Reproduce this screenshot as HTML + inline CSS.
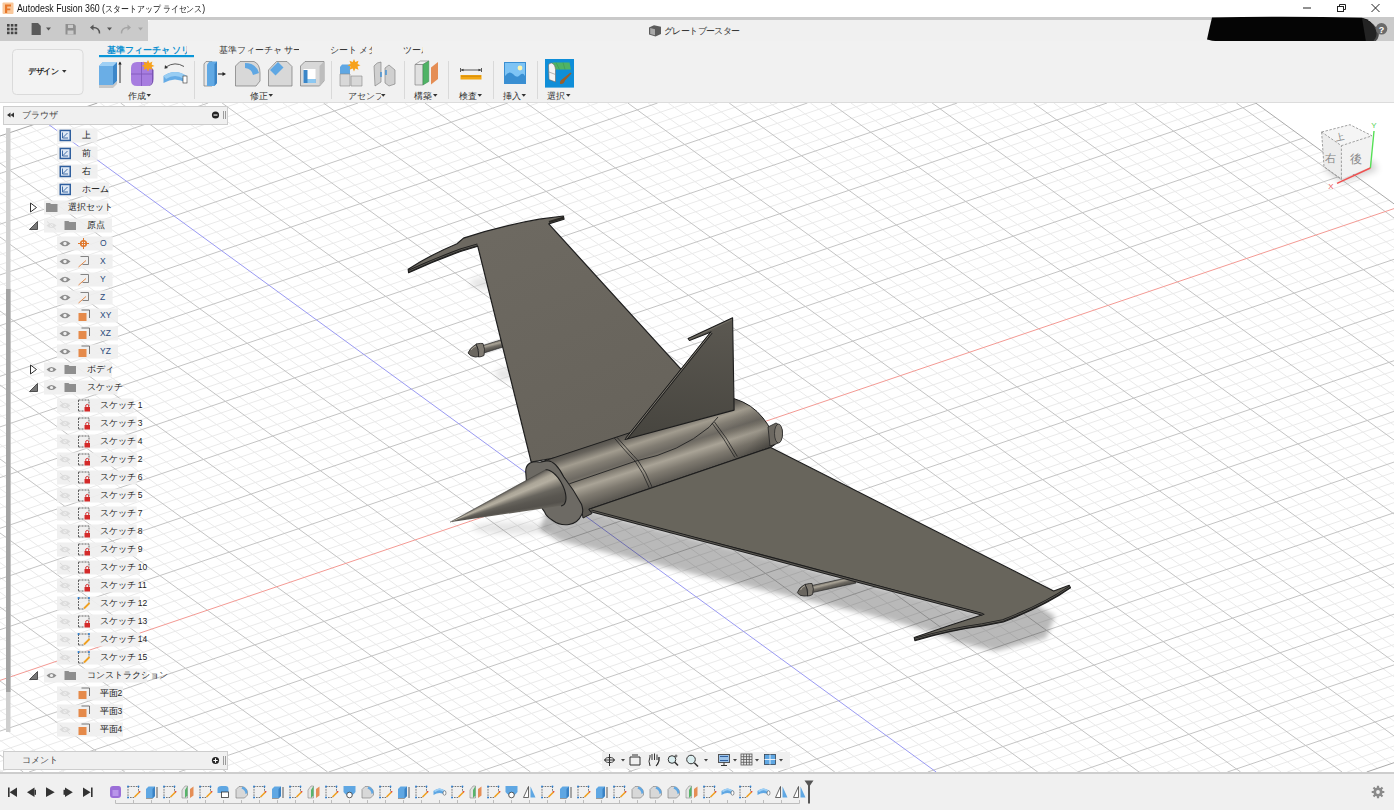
<!DOCTYPE html>
<html><head><meta charset="utf-8">
<style>
*{margin:0;padding:0;box-sizing:border-box}
html,body{width:1394px;height:810px;overflow:hidden;background:#fff;font-family:"Liberation Sans",sans-serif;color:#222}
.a{position:absolute}
#vp{position:absolute;left:0;top:0;width:1394px;height:810px}
.t{position:absolute;font-size:11px;white-space:nowrap;line-height:12px}
</style></head><body>
<svg id="vp" width="1394" height="810" viewBox="0 0 1394 810">
<defs>
<filter id="blur8" x="-30%" y="-30%" width="160%" height="160%"><feGaussianBlur stdDeviation="7"/></filter>
<filter id="blur4" x="-30%" y="-30%" width="160%" height="160%"><feGaussianBlur stdDeviation="4.5"/></filter>
<filter id="blur25" x="-30%" y="-30%" width="160%" height="160%"><feGaussianBlur stdDeviation="2.5"/></filter>
<filter id="blur3" x="-30%" y="-30%" width="160%" height="160%"><feGaussianBlur stdDeviation="3"/></filter>
</defs>
<rect x="0" y="103" width="1394" height="670" fill="#fff"/>
<path d="M0.0 143.1L118.3 103.0M0.0 153.2L148.3 103.0M0.0 163.3L178.3 103.0M0.0 183.6L238.2 103.0M0.0 193.7L268.1 103.0M0.0 203.9L298.1 103.0M0.0 214.0L328.1 103.0M0.0 769.8L3.0 772.0M0.0 234.3L388.0 103.0M-0.0 740.2L43.6 772.0M0.0 244.4L417.9 103.0M0.0 725.4L63.9 772.0M0.0 254.6L447.9 103.0M0.0 710.6L84.2 772.0M0.0 264.7L477.9 103.0M0.0 695.8L104.5 772.0M0.0 285.0L537.8 103.0M0.0 666.2L145.1 772.0M0.0 295.1L567.7 103.0M0.0 651.4L165.3 772.0M0.0 305.3L597.7 103.0M0.0 636.6L185.6 772.0M0.0 315.4L627.6 103.0M0.0 621.8L205.9 772.0M0.0 335.7L687.6 103.0M0.0 592.2L246.5 772.0M0.0 345.8L717.5 103.0M0.0 577.4L266.8 772.0M0.0 356.0L747.5 103.0M0.0 562.6L287.1 772.0M0.0 366.1L777.4 103.0M0.0 547.8L307.4 772.0M0.0 386.4L837.4 103.0M0.0 518.2L347.9 772.0M0.0 396.5L867.3 103.0M0.0 503.4L368.2 772.0M0.0 406.7L897.3 103.0M0.0 488.6L388.5 772.0M0.0 416.8L927.2 103.0M0.0 473.8L408.8 772.0M0.0 437.1L987.2 103.0M-0.0 444.2L449.4 772.0M0.0 447.2L1017.1 103.0M0.0 429.4L469.6 772.0M0.0 457.4L1047.1 103.0M0.0 414.6L489.9 772.0M0.0 467.5L1077.0 103.0M0.0 399.8L510.2 772.0M0.0 487.8L1137.0 103.0M0.0 370.2L550.8 772.0M0.0 497.9L1166.9 103.0M0.0 355.4L571.1 772.0M0.0 508.1L1196.9 103.0M0.0 340.6L591.4 772.0M0.0 518.2L1226.8 103.0M0.0 325.8L611.7 772.0M0.0 538.5L1265.5 110.2M0.0 296.2L652.2 772.0M0.0 548.6L1275.0 117.1M0.0 281.4L672.5 772.0M0.0 558.8L1284.5 124.0M0.0 266.6L692.8 772.0M0.0 568.9L1294.0 131.0M0.0 251.8L713.1 772.0M0.0 589.2L1313.0 144.8M0.0 222.2L753.7 772.0M0.0 599.3L1322.5 151.7M-0.0 207.4L774.0 772.0M0.0 609.5L1332.0 158.7M0.0 192.6L794.2 772.0M0.0 619.6L1341.5 165.6M-0.0 177.8L814.5 772.0M0.0 639.9L1360.5 179.4M0.0 148.2L855.1 772.0M0.0 650.0L1370.0 186.4M2.4 135.1L875.4 772.0M0.0 660.1L1379.5 193.3M16.3 130.5L895.7 772.0M0.0 670.3L1389.0 200.2M30.1 125.8L916.0 772.0M0.0 690.6L1394.0 218.8M57.8 116.4L956.5 772.0M0.0 700.7L1394.0 228.9M71.7 111.7L976.8 772.0M0.0 710.8L1394.0 239.1M85.5 107.0L997.1 772.0M0.0 721.0L1394.0 249.2M100.3 103.0L1017.4 772.0M0.0 741.3L1394.0 269.5M140.9 103.0L1058.0 772.0M0.0 751.4L1394.0 279.6M161.2 103.0L1078.3 772.0M0.0 761.5L1394.0 289.8M181.5 103.0L1098.5 772.0M0.0 771.7L1394.0 299.9M201.8 103.0L1118.8 772.0M59.0 772.0L1394.0 320.2M242.4 103.0L1159.4 772.0M88.9 772.0L1394.0 330.3M262.6 103.0L1179.7 772.0M118.9 772.0L1394.0 340.5M282.9 103.0L1200.0 772.0M148.8 772.0L1394.0 350.6M303.2 103.0L1220.3 772.0M208.8 772.0L1394.0 370.9M343.8 103.0L1260.8 772.0M238.7 772.0L1394.0 381.0M364.1 103.0L1281.1 772.0M268.7 772.0L1394.0 391.2M384.4 103.0L1301.4 772.0M298.6 772.0L1394.0 401.3M404.6 103.0L1321.7 772.0M358.5 772.0L1394.0 421.6M445.2 103.0L1362.3 772.0M388.5 772.0L1394.0 431.7M465.5 103.0L1377.5 768.3M418.5 772.0L1394.0 441.8M485.8 103.0L1391.4 763.6M448.4 772.0L1394.0 452.0M506.1 103.0L1394.0 750.7M508.3 772.0L1394.0 472.3M546.7 103.0L1394.0 721.1M538.3 772.0L1394.0 482.4M566.9 103.0L1394.0 706.3M568.3 772.0L1394.0 492.5M587.2 103.0L1394.0 691.5M598.2 772.0L1394.0 502.7M607.5 103.0L1394.0 676.7M658.1 772.0L1394.0 523.0M648.1 103.0L1394.0 647.1M688.1 772.0L1394.0 533.1M668.4 103.0L1394.0 632.4M718.1 772.0L1394.0 543.2M688.7 103.0L1394.0 617.6M748.0 772.0L1394.0 553.4M709.0 103.0L1394.0 602.8M807.9 772.0L1394.0 573.7M749.5 103.0L1394.0 573.2M837.9 772.0L1394.0 583.8M769.8 103.0L1394.0 558.4M867.9 772.0L1394.0 593.9M790.1 103.0L1394.0 543.6M897.8 772.0L1394.0 604.1M810.4 103.0L1394.0 528.8M957.7 772.0L1394.0 624.4M851.0 103.0L1394.0 499.2M987.7 772.0L1394.0 634.5M871.2 103.0L1394.0 484.4M1017.6 772.0L1394.0 644.6M891.5 103.0L1394.0 469.6M1047.6 772.0L1394.0 654.8M911.8 103.0L1394.0 454.8M1107.5 772.0L1394.0 675.0M952.4 103.0L1394.0 425.2M1137.5 772.0L1394.0 685.2M972.7 103.0L1394.0 410.4M1167.4 772.0L1394.0 695.3M993.0 103.0L1394.0 395.6M1197.4 772.0L1394.0 705.5M1013.3 103.0L1394.0 380.8M1257.3 772.0L1394.0 725.7M1053.8 103.0L1394.0 351.2M1287.3 772.0L1394.0 735.9M1074.1 103.0L1394.0 336.4M1317.2 772.0L1394.0 746.0M1094.4 103.0L1394.0 321.6M1347.2 772.0L1394.0 756.2M1114.7 103.0L1394.0 306.8M1155.3 103.0L1394.0 277.2M1175.6 103.0L1394.0 262.4M1195.8 103.0L1394.0 247.6M1216.1 103.0L1394.0 232.8" stroke="#eaeaea" stroke-width="1" fill="none"/>
<path d="M0.0 173.5L208.2 103.0M0.0 224.2L358.0 103.0M0.0 755.0L23.3 772.0M0.0 274.9L507.8 103.0M0.0 681.0L124.8 772.0M0.0 325.6L657.6 103.0M0.0 607.0L226.2 772.0M0.0 376.3L807.4 103.0M0.0 533.0L327.6 772.0M0.0 426.9L957.2 103.0M0.0 459.0L429.1 772.0M0.0 477.6L1107.0 103.0M0.0 385.0L530.5 772.0M0.0 528.3L1256.0 103.3M0.0 311.0L631.9 772.0M0.0 579.0L1303.5 137.9M0.0 237.0L733.4 772.0M0.0 629.7L1351.0 172.5M0.0 163.0L834.8 772.0M0.0 731.1L1394.0 259.3M120.6 103.0L1037.7 772.0M29.0 772.0L1394.0 310.0M222.1 103.0L1139.1 772.0M178.8 772.0L1394.0 360.7M323.5 103.0L1240.6 772.0M328.6 772.0L1394.0 411.4M424.9 103.0L1342.0 772.0M478.4 772.0L1394.0 462.1M526.4 103.0L1394.0 735.9M628.2 772.0L1394.0 512.8M627.8 103.0L1394.0 661.9M778.0 772.0L1394.0 563.5M729.2 103.0L1394.0 588.0M927.8 772.0L1394.0 614.2M830.7 103.0L1394.0 514.0M1077.6 772.0L1394.0 664.9M932.1 103.0L1394.0 440.0M1227.4 772.0L1394.0 715.6M1033.5 103.0L1394.0 366.0M1135.0 103.0L1394.0 292.0M1236.4 103.0L1394.0 218.0" stroke="#c4c4c4" stroke-width="1" fill="none"/>
<path d="M0.0 136.0L97.4 103.0M1366.7 772.0L1394.0 762.7M1255.7 103.0L1394.0 203.9" stroke="#a9a9a9" stroke-width="1" fill="none"/>
<path d="M0.0 680.4L1394.0 208.6" stroke="#f39a94" stroke-width="1" fill="none"/>
<path d="M44.0 121.1L936.2 772.0" stroke="#9a9af2" stroke-width="1" fill="none"/>

<defs>
<linearGradient id="gFus" gradientUnits="userSpaceOnUse" x1="650" y1="426" x2="668" y2="482">
<stop offset="0" stop-color="#55524c"/><stop offset="0.08" stop-color="#67635c"/><stop offset="0.22" stop-color="#a29c8f"/>
<stop offset="0.34" stop-color="#827d73"/><stop offset="0.46" stop-color="#6d6962"/><stop offset="0.52" stop-color="#7d786e"/>
<stop offset="0.64" stop-color="#a9a396"/><stop offset="0.8" stop-color="#7f7a70"/><stop offset="1" stop-color="#5a5751"/>
</linearGradient>
<linearGradient id="gCone" gradientUnits="userSpaceOnUse" x1="545" y1="470" x2="557" y2="506">
<stop offset="0" stop-color="#5f5c56"/><stop offset="0.12" stop-color="#8a857b"/><stop offset="0.3" stop-color="#b6b0a2"/>
<stop offset="0.45" stop-color="#8f8a7f"/><stop offset="0.62" stop-color="#6a675f"/><stop offset="0.85" stop-color="#57544e"/><stop offset="1" stop-color="#625f58"/>
</linearGradient>
<linearGradient id="gRear" gradientUnits="userSpaceOnUse" x1="738" y1="410" x2="778" y2="440">
<stop offset="0" stop-color="#000" stop-opacity="0"/><stop offset="0.6" stop-color="#000" stop-opacity="0.08"/><stop offset="1" stop-color="#000" stop-opacity="0.3"/></linearGradient>
<linearGradient id="gFin" gradientUnits="userSpaceOnUse" x1="700" y1="320" x2="690" y2="440">
<stop offset="0" stop-color="#5b5851"/><stop offset="1" stop-color="#47453f"/>
</linearGradient>
<linearGradient id="gWingU" gradientUnits="userSpaceOnUse" x1="500" y1="230" x2="600" y2="450">
<stop offset="0" stop-color="#6d6961"/><stop offset="1" stop-color="#67635b"/>
</linearGradient>
<linearGradient id="gPitB" gradientUnits="userSpaceOnUse" x1="492" y1="342" x2="494" y2="350">
<stop offset="0" stop-color="#6e6a62"/><stop offset="0.3" stop-color="#a9a396"/><stop offset="0.6" stop-color="#6d6962"/><stop offset="1" stop-color="#4d4b46"/></linearGradient>
<linearGradient id="gPitB2" gradientUnits="userSpaceOnUse" x1="830" y1="581" x2="832" y2="589">
<stop offset="0" stop-color="#6e6a62"/><stop offset="0.3" stop-color="#a9a396"/><stop offset="0.6" stop-color="#6d6962"/><stop offset="1" stop-color="#4d4b46"/></linearGradient>
<linearGradient id="gPit" gradientUnits="userSpaceOnUse" x1="0" y1="0" x2="0.3" y2="1">
<stop offset="0" stop-color="#5b5852"/><stop offset="0.35" stop-color="#a8a295"/><stop offset="1" stop-color="#4e4c47"/>
</linearGradient>
</defs>
<!-- shadows -->
<g filter="url(#blur25)" opacity="0.27">
<path d="M545 515 L590 511 L984 614.5 L1035 604 L1055 616 L1046 638 L996 651 L960 643 L929 631 L870 615 L689 573 L560 541 L540 530 Z" fill="#000"/>
</g>
<g filter="url(#blur3)" opacity="0.1">
<ellipse cx="484" cy="283" rx="14" ry="6" fill="#000"/>
<ellipse cx="505" cy="374" rx="10" ry="6" fill="#000"/>
<ellipse cx="512" cy="528" rx="40" ry="6" fill="#000"/>
</g>
<!-- pitot 1 -->
<path d="M483 345.5 L502 339.5 L503 347 L484 353 Z" fill="url(#gPitB)"/>
<path d="M483 345.5 L502 339.5 M484 353 L503 347" stroke="#2a2a2a" stroke-width="0.7"/>
<path d="M468 353 Q470 348 475 345 L477 344 L479 356.5 L475.5 357 Q470 356.5 468 353 Z" fill="#6a665f" stroke="#222" stroke-width="0.8"/>
<path d="M476 344 Q481 343 483 343.5 Q485.5 349 484 355.5 Q481 357 478.5 357 Q480 350 476 344 Z" fill="#807b72" stroke="#222" stroke-width="0.8"/>
<path d="M471 350 Q473 347 476 346" stroke="#b0aa9c" stroke-width="1" fill="none"/>
<!-- upper wing -->
<path d="M408.2 269.2 Q430 255 457 243.7 L463.5 238.1 Q500 226 539.3 219.2 L563.4 216 L564 219.2 L548.7 223.9 L680 368.1 L712 403 L600 450 L531.2 462.1 L477.8 246.3 L460.5 251.5 Q434 261 408.6 272.7 Z" fill="url(#gWingU)" stroke="#1e1e1e" stroke-width="1.2" stroke-linejoin="round"/>
<path d="M409 271 Q434 259.5 460.5 249.8 L477.6 244.8" stroke="#1e1e1e" stroke-width="2.6" fill="none"/><path d="M409 271 Q434 259.5 460.5 249.8 L477.6 244.8" stroke="#6f6b63" stroke-width="0.7" fill="none"/>
<path d="M549 222 L563.8 217.6" stroke="#2a2824" stroke-width="2.2" fill="none"/>
<!-- fuselage -->
<path d="M540.7 462.1 L615 437.6 L734 398.6 Q752 404 763 418 Q773 430 775 444.5 L770.7 447.4 L589 509.2 L592 513.5 L583 518 L581.5 508.3 L563.8 477 Z" fill="url(#gFus)" stroke="#1e1e1e" stroke-width="1"/>
<path d="M734 398.6 Q752 404 763 418 Q773 430 775 444.5 L770.7 447.4 L736 459 L712 423 Z" fill="url(#gRear)"/>
<!-- fairing/seam -->
<path d="M569.3 483.8 L636 461 Q680 452 709 427.3 L718 417" stroke="#222" stroke-width="0.9" fill="none"/>
<!-- rings -->
<path d="M614.3 438 Q626 452 635 461 Q643 472 649.5 488.5" stroke="#222" stroke-width="0.8" fill="none"/>
<path d="M617 437.3 Q629 451 638 460.5 Q646 471.5 652.3 487.5" stroke="#222" stroke-width="0.8" fill="none"/>
<path d="M712 423 Q724 438 734.9 457.4" stroke="#222" stroke-width="0.8" fill="none"/>
<path d="M714.5 422 Q726.5 437 737.4 456.5" stroke="#222" stroke-width="0.8" fill="none"/>
<!-- fin -->
<path d="M732.6 317.8 L688.1 338.5 L689.5 340.5 L711.1 331.9 L625.1 439.5 L734.1 410.1 Z" fill="url(#gFin)" stroke="#1c1c1c" stroke-width="1.1" stroke-linejoin="round"/>
<path d="M689 339.5 L732 319.5" stroke="#7a766c" stroke-width="0.8"/>
<path d="M711.5 332.5 L626.5 438.5" stroke="#1c1c1c" stroke-width="2.6"/>
<path d="M711.5 332.5 L626.5 438.5" stroke="#8e897d" stroke-width="0.9"/>
<!-- rear nozzle -->
<path d="M768 427 L776 423 Q783 426 782.5 434 Q782 442 776 444 L770 446 Z" fill="#6c6861" stroke="#222" stroke-width="0.8"/>
<ellipse cx="778.5" cy="433.5" rx="4" ry="9.5" fill="#807b72" stroke="#222" stroke-width="0.7"/>
<!-- front face -->
<path d="M525.8 473 Q525 466 530 463 Q535 461 540 462.2 L547.5 460.7 Q556 461 563.8 477 Q574 490 581.5 504.2 Q584 512 581.5 515 Q578 523 569 524.5 Q560 526 552 520 Q546 516 544.8 512.3 Q535 498 526.5 482 Z" fill="#6d6a64" stroke="#1e1e1e" stroke-width="1.1"/>
<!-- cone -->

<!-- pitot 2 -->
<path d="M812 585.5 L856 576 L856 583 L812.5 592.5 Z" fill="url(#gPitB2)"/>
<path d="M812 585.5 L856 576 M812.5 592.5 L856 583" stroke="#2a2a2a" stroke-width="0.7"/>
<path d="M797.4 592.6 Q799 587.5 804 585 L806 584.2 L808 595.8 L804 596 Q799 596 797.4 592.6 Z" fill="#6a665f" stroke="#222" stroke-width="0.8"/>
<path d="M805 584.5 Q810 583 812 583.5 Q814.5 589 812.5 594.5 Q810 596 807.5 596 Q809 589.5 805 584.5 Z" fill="#807b72" stroke="#222" stroke-width="0.8"/>
<path d="M800.5 590 Q802 587 805 585.8" stroke="#b0aa9c" stroke-width="1" fill="none"/>
<!-- lower wing -->
<path d="M589 509.2 L770.7 447.4 L1053.7 591 L1069.2 585.2 L1070.5 587.8 Q1045 606 1003.3 622 L982.6 625.9 Q950 630 914.9 640.7 L914.2 637.5 Q950 625 984 614.2 L780 559.5 L589.8 510.8 Z" fill="#68655c" stroke="#1e1e1e" stroke-width="1.1" stroke-linejoin="round"/>
<path d="M591 510.8 L982.5 614.3" stroke="#1e1e1e" stroke-width="2.8" fill="none"/><path d="M591 510.8 L982.5 614.3" stroke="#6f6b63" stroke-width="0.8" fill="none"/>
<path d="M1069.5 587 Q1044 604.5 1003 620.5 L982.5 624.5 Q950 629 915 639" stroke="#1e1e1e" stroke-width="2.6" fill="none"/><path d="M1069.5 587 Q1044 604.5 1003 620.5 L982.5 624.5 Q950 629 915 639" stroke="#6f6b63" stroke-width="0.7" fill="none"/>

</svg>
<div class="a" style="left:440px;top:460px;width:130px;height:70px;clip-path:polygon(10.00px 62.20px,105.55px 9.75px,106.36px 9.72px,107.21px 9.80px,108.10px 9.99px,109.02px 10.29px,109.97px 10.70px,110.93px 11.22px,111.92px 11.84px,112.91px 12.55px,113.90px 13.36px,114.89px 14.26px,115.87px 15.24px,116.83px 16.30px,117.78px 17.43px,118.69px 18.63px,119.57px 19.88px,120.42px 21.18px,121.21px 22.52px,121.96px 23.89px,122.66px 25.29px,123.30px 26.70px,123.88px 28.12px,124.39px 29.54px,124.83px 30.94px,125.21px 32.33px,125.50px 33.69px,125.73px 35.01px,125.88px 36.29px,125.95px 37.52px,125.94px 38.69px,125.85px 39.79px,125.69px 40.81px,125.45px 41.76px,125.13px 42.62px,124.75px 43.38px,124.29px 44.06px,123.76px 44.63px,123.17px 45.09px,122.52px 45.46px,121.81px 45.71px,121.05px 45.85px);background:conic-gradient(from 0deg at 10.0px 62.2px,#5a5752 0deg,#5a5752 61.24deg,#827d74 62.66deg,#aca698 64.91deg,#b4aea0 67.35deg,#8e897e 69.80deg,#68655e 72.45deg,#5a5751 75.92deg,#54514c 79.59deg,#66635c 81.62deg,#66635c 360deg)"></div>
<svg class="a" style="left:0;top:0" width="1394" height="810"><path d="M545.5 469.8 L546.36 469.72 L547.21 469.80 L548.10 469.99 L549.02 470.29 L549.97 470.70 L550.93 471.22 L551.92 471.84 L552.91 472.55 L553.90 473.36 L554.89 474.26 L555.87 475.24 L556.83 476.30 L557.78 477.43 L558.69 478.63 L559.57 479.88 L560.42 481.18 L561.21 482.52 L561.96 483.89 L562.66 485.29 L563.30 486.70 L563.88 488.12 L564.39 489.54 L564.83 490.94 L565.21 492.33 L565.50 493.69 L565.73 495.01 L565.88 496.29 L565.95 497.52 L565.94 498.69 L565.85 499.79 L565.69 500.81 L565.45 501.76 L565.13 502.62 L564.75 503.38 L564.29 504.06 L563.76 504.63 L563.17 505.09 L562.52 505.46 L561.81 505.71 L561.05 505.85" stroke="#1e1e1e" stroke-width="1.1" fill="none"/><path d="M450 522.2 L545.6 469.8" stroke="#4a4843" stroke-width="0.6"/></svg>

<!-- ===== title bar ===== -->
<svg class="a" style="left:0;top:0" width="1394" height="103">
<rect x="0" y="0" width="1394" height="17" fill="#fff"/>
<rect x="2.5" y="2.5" width="11" height="11.5" rx="1" fill="#f9c89b"/>
<path d="M5 4.5 H11 V6.5 H7.2 V8.5 H10.3 V10.3 H7.2 V13 H5 Z" fill="#e8772a"/>
<!-- window controls -->
<path d="M1303 8 H1311" stroke="#222" stroke-width="1"/>
<rect x="1337.5" y="6.5" width="6" height="5" fill="none" stroke="#222" stroke-width="1"/>
<path d="M1339.5 6.5 V4.5 H1345.5 V9.5 H1343.5" fill="none" stroke="#222" stroke-width="1"/>
<path d="M1371.5 4 L1379.5 12 M1379.5 4 L1371.5 12" stroke="#222" stroke-width="1"/>
<!-- top strip -->
<rect x="0" y="17" width="1394" height="3" fill="#c9c9c9"/>
<rect x="0" y="17" width="148" height="24" fill="#cacaca"/>
<path d="M148 41 V23 Q148 20 151 20 H1394 V41 Z" fill="#f0f0f0"/>
<rect x="1369" y="20" width="25" height="21" fill="#cbcbcb"/>
<!-- apps grid -->
<g fill="#454545">
<rect x="7" y="24" width="2.6" height="2.6"/><rect x="10.8" y="24" width="2.6" height="2.6"/><rect x="14.6" y="24" width="2.6" height="2.6"/>
<rect x="7" y="27.8" width="2.6" height="2.6"/><rect x="10.8" y="27.8" width="2.6" height="2.6"/><rect x="14.6" y="27.8" width="2.6" height="2.6"/>
<rect x="7" y="31.6" width="2.6" height="2.6"/><rect x="10.8" y="31.6" width="2.6" height="2.6"/><rect x="14.6" y="31.6" width="2.6" height="2.6"/>
</g>
<path d="M31.6 23 H38 L40.8 26 V35 H31.6 Z" fill="#5a5a5a"/>
<path d="M46 27.5 H51 L48.5 30.5 Z" fill="#555"/>
<path d="M65.5 24 H74 L75.8 25.8 V34.4 H65.5 Z" fill="#8f8f8f"/>
<rect x="68" y="24.8" width="5" height="3.2" fill="#cacaca"/><rect x="67.5" y="30.5" width="6" height="3.9" fill="#cacaca"/>
<path d="M99.5 33.5 Q99.5 27.5 93 27.5 H91.5" fill="none" stroke="#555" stroke-width="1.4"/>
<path d="M90 27.5 L93.5 24.5 V30.5 Z" fill="#555"/>
<path d="M107 27.5 H112 L109.5 30.5 Z" fill="#555"/>
<path d="M121.5 33.5 Q121.5 27.5 128 27.5 H129.5" fill="none" stroke="#a5a5a5" stroke-width="1.4"/>
<path d="M131 27.5 L127.5 24.5 V30.5 Z" fill="#a5a5a5"/>
<path d="M138 27.5 H143 L140.5 30.5 Z" fill="#a5a5a5"/>
<!-- doc tab cube -->
<path d="M649 27.5 L654 25.2 L661 26.8 V34 L655.5 36.4 L649 34.5 Z" fill="#5c5c5c"/>
<path d="M650.2 28 L655 29.3 V35.2 L650.2 33.9 Z" fill="#a9a9a9"/>
<!-- redaction blob -->
<path d="M1212 17.5 Q1290 16 1362 17.8 Q1372 20 1376 30 Q1378 38 1372 42 Q1300 43.5 1240 42.5 Q1215 42 1207 39.5 Q1209 30 1212 17.5 Z" fill="#050505"/>
<path d="M1362 18 Q1374 22 1379 32 Q1379 40 1374 42 L1366 42 Z" fill="#2a2a2a" opacity="0.8"/>
<circle cx="1381.5" cy="28.8" r="5.8" fill="#6a6a6a"/>
<text x="1381.5" y="32.5" font-family="Liberation Sans" font-weight="bold" font-size="9" fill="#fff" text-anchor="middle">?</text>
<!-- ribbon -->
<rect x="0" y="41" width="1394" height="61" fill="#f1f1f1"/>
<rect x="0" y="102" width="1394" height="1" fill="#dcdcdc"/>
<rect x="12.5" y="49.5" width="70.5" height="45" rx="4" fill="#f3f3f3" stroke="#dadada" stroke-width="1"/>
<path d="M62 70 H66.5 L64.25 72.8 Z" fill="#333"/>
<rect x="99" y="55" width="95" height="2.2" fill="#0a96d8"/>
<g stroke="#d9d9d9" stroke-width="1">
<path d="M194.5 61 V99 M331.5 61 V99 M404.5 61 V99 M448.5 61 V99 M493.5 61 V99 M537.5 61 V99"/>
</g>
<!-- dropdown arrows for labels -->
<g fill="#333">
<path d="M146.5 94 H151 L148.75 96.8 Z"/>
<path d="M268.5 94 H273 L270.75 96.8 Z"/>
<path d="M381 94 H385.5 L383.25 96.8 Z"/>
<path d="M433 94 H437.5 L435.25 96.8 Z"/>
<path d="M477.5 94 H482 L479.75 96.8 Z"/>
<path d="M521.5 94 H526 L523.75 96.8 Z"/>
<path d="M566 94 H570.5 L568.25 96.8 Z"/>
</g>
<!-- extrude icon -->
<path d="M99 66 L103 62 H117 V81 L113 85 H99 Z" fill="#6aaee6"/>
<path d="M113 66 L117 62 V81 L113 85 Z" fill="#3d87c9"/>
<path d="M99 66 L103 62 H117 L113 66 Z" fill="#9fd0f5"/>
<path d="M99 85 H113 L117 81 V84 L113 88 H99 Z" fill="#c8c8c8"/>
<path d="M120 83 V62.5" stroke="#222" stroke-width="0.9"/><path d="M118.3 64.5 L120 61.5 L121.7 64.5 Z" fill="#222"/>
<!-- purple solid icon -->
<path d="M131 68 Q131 62 137 62 H146 Q152 62 152 68 V80 Q152 86 146 86 H137 Q131 86 131 80 Z" fill="#a77de0"/>
<path d="M141.5 62 V86 M131 74 H152" stroke="#7d55b8" stroke-width="0.8"/>
<path d="M152 68 V80 Q152 86 146 86 H149 Q153.5 85 153.5 79 V70 Z" fill="#7a52b5"/>
<path d="M148 60 L149.5 63 L152.5 61.5 L151.5 64.5 L154.5 66 L151.5 67 L152.5 70 L149.5 68.5 L148 71.5 L146.5 68.5 L143.5 70 L144.5 67 L141.5 66 L144.5 64.5 L143.5 61.5 L146.5 63 Z" fill="#f7a21b"/>
<!-- revolve icon -->
<path d="M163.5 76 Q175 68 186.5 76 V83 Q175 76 163.5 83 Z" fill="#66ace6"/>
<path d="M163.5 76 Q175 68 186.5 76 L184 79 Q175 73 166 79 Z" fill="#98cdf3"/>
<rect x="183" y="76" width="4" height="7" fill="#fff" stroke="#333" stroke-width="0.6"/>
<path d="M166 67 Q175 61 184 66.5" fill="none" stroke="#333" stroke-width="0.8"/><path d="M165 65 L164.5 68.8 L168 68 Z" fill="#333"/>
<!-- press pull -->
<path d="M204 64 L206 61.5 H212 V86 H204 Z" fill="#e6e6e6" stroke="#777" stroke-width="0.7"/>
<path d="M207 64.5 L209.5 61.5 H217 V83 L214.5 86 H207 Z" fill="#61a9e4"/>
<path d="M214.5 64.5 L217 61.5 V83 L214.5 86 Z" fill="#3b83c4"/>
<path d="M218 74 H223.5" stroke="#222" stroke-width="1.1"/><path d="M222.5 72 L226 74 L222.5 76 Z" fill="#222"/>
<!-- fillet -->
<path d="M235.5 66 L240 61.5 H254 Q260 64 260 73 V81 L256 86 H235.5 Z" fill="#d8d8d8" stroke="#777" stroke-width="0.7"/>
<path d="M245 63 Q256 63 259 73 L253 75 Q252 69 245 68 Z" fill="#5fa7e3"/>
<!-- chamfer -->
<path d="M268.5 70 L276.5 61.5 H287 L292 66.5 V86 H268.5 Z" fill="#d8d8d8" stroke="#777" stroke-width="0.7"/>
<path d="M270 70 L278 62 L283.5 67.5 L275.5 75.5 Z" fill="#5fa7e3"/>
<!-- shell -->
<path d="M300.5 66 L305 61.5 H324 V81 L319.5 86 H300.5 Z" fill="#d8d8d8" stroke="#777" stroke-width="0.7"/>
<path d="M319.5 66 L324 61.5 V81 L319.5 86 Z" fill="#bdbdbd"/>
<rect x="303.5" y="69" width="12" height="14" fill="#fff"/>
<path d="M303.5 70 H307.5 V79 H315.5 V83 H303.5 Z" fill="#3a86c8"/><path d="M307.5 79 H315.5 V83 H307.5Z" fill="#8cc8f2"/>
<!-- assembly new component -->
<path d="M340 67 L342 64.5 H350 V74 H340 Z" fill="#5fa7e3"/>
<path d="M340 74 H350 V86 H340 Z M351 76 H362 V86 H351 Z" fill="#d8d8d8" stroke="#888" stroke-width="0.6"/>
<path d="M354 59 L355.3 62 L358.5 60.8 L357.5 64 L360.5 65.3 L357.5 66.5 L358.5 69.7 L355.3 68.5 L354 71.5 L352.7 68.5 L349.5 69.7 L350.5 66.5 L347.5 65.3 L350.5 64 L349.5 60.8 L352.7 62 Z" fill="#f7a21b"/>
<!-- joint -->
<path d="M374 66 Q377 62 381 62 V82 L375 86 Z" fill="#d0d0d0" stroke="#777" stroke-width="0.6"/>
<path d="M385 68 L389 65 L395 70 V84 L389 86 L385 83 Z" fill="#d0d0d0" stroke="#777" stroke-width="0.6"/>
<path d="M381 72 V77 M386 70 V75" stroke="#3d8fd6" stroke-width="1.4"/>
<!-- construct -->
<path d="M415 64.5 L420.5 61 H428.8 L423 64.5 Z" fill="#f2f2f2" stroke="#777" stroke-width="0.6"/>
<path d="M415 64.5 H423 V85 H415 Z" fill="#e0e0e0" stroke="#777" stroke-width="0.6"/>
<path d="M423 64.5 L428.8 61 V81.5 L423 85 Z" fill="#4fb365" stroke="#3a8a4c" stroke-width="0.5"/>
<path d="M431 67.5 L438 62 V79 L431 84.5 Z" fill="#e58e55"/>
<!-- measure -->
<path d="M460.5 68 V72 M481.5 68 V72 M461 70 H481" stroke="#333" stroke-width="0.8"/>
<path d="M461 70 L463.5 68.8 V71.2 Z M481 70 L478.5 68.8 V71.2 Z" fill="#333"/>
<rect x="460.5" y="75" width="21" height="4.5" fill="#f3a712"/>
<path d="M461.5 76.2 H480.5" stroke="#a86400" stroke-width="0.9" stroke-dasharray="1 1"/>
<!-- insert image -->
<rect x="504" y="62" width="22" height="22" fill="#3a8fd2"/>
<rect x="505" y="63" width="20" height="20" fill="#7ec4f5"/>
<path d="M505 83 V76 Q509 70 513 74 Q517 79 520 75 Q523 72 525 76 V83 Z" fill="#3a8fd2"/>
<circle cx="520" cy="68" r="2.4" fill="#fdf6b0"/>
<!-- select -->
<rect x="545" y="59" width="29" height="28.6" fill="#0f8ed8"/>
<path d="M549 64 L553 62.5 H569.5 L571 69.5 H555.5 Z" fill="#4fb365"/>
<path d="M556 62.5 L559.5 69.5 M563 62.5 L565 69.5" stroke="#3e9552" stroke-width="0.6"/>
<path d="M548.5 65 Q549 63 551.5 63 Q555 64 555.5 69.5 V82 L549 79.5 Z" fill="#f4f4f4" stroke="#666" stroke-width="0.6"/>
<path d="M549 72 L555.5 74.5" stroke="#888" stroke-width="0.6"/>
<path d="M560 84 Q559.5 80.5 562.5 79 L570.5 72.5 L571.6 73.6 L565 80.5 Q564 84.5 560 84 Z" fill="#9a5f2a"/>
</svg>
<div class="t" style="left:17px;top:2.5px;font-size:10px;line-height:12px;color:#111;transform:scaleX(0.88);transform-origin:0 0">Autodesk Fusion 360 (<span style="font-size:9px">スタートアップ ライセンス</span>)</div>
<div class="t" style="left:664px;top:25px;font-size:9px;color:#333;width:76px;overflow:hidden;letter-spacing:-0.6px">グレートブースター v1</div>
<div class="t" style="left:28px;top:65.5px;font-size:8px;font-weight:bold;color:#222;width:31px;overflow:hidden;letter-spacing:-0.3px">デザイン</div>
<div class="t" style="left:107px;top:43.5px;font-size:8.5px;font-weight:bold;color:#0a8fd0;width:80px;overflow:hidden">基準フィーチャ ソリッド</div>
<div class="t" style="left:219px;top:43.5px;font-size:8.5px;color:#333;width:80px;overflow:hidden">基準フィーチャ サーフェス</div>
<div class="t" style="left:330px;top:43.5px;font-size:8.5px;color:#333;width:42px;overflow:hidden">シート メタル</div>
<div class="t" style="left:403px;top:43.5px;font-size:8.5px;color:#333;width:20px;overflow:hidden">ツール</div>
<div class="t" style="left:128px;top:89.5px;font-size:9px;color:#333">作成</div>
<div class="t" style="left:250px;top:89.5px;font-size:9px;color:#333">修正</div>
<div class="t" style="left:348px;top:89.5px;font-size:8.5px;color:#333;width:33px;overflow:hidden">アセンブリ</div>
<div class="t" style="left:414px;top:89.5px;font-size:9px;color:#333">構築</div>
<div class="t" style="left:459px;top:89.5px;font-size:9px;color:#333">検査</div>
<div class="t" style="left:503px;top:89.5px;font-size:9px;color:#333">挿入</div>
<div class="t" style="left:547px;top:89.5px;font-size:9px;color:#333">選択</div>

<svg class="a" style="left:0;top:103px" width="240" height="670">
<rect x="3.5" y="3.5" width="224" height="18" fill="#f0f0f0" stroke="#cdcdcd" stroke-width="1"/>
<path d="M7 12.0 L10.5 9.5 V14.5 Z M10.5 12.0 L14 9.5 V14.5 Z" fill="#333"/>
<circle cx="215.5" cy="12.0" r="3.6" fill="#222"/><rect x="213.5" y="11.5" width="4" height="1.1" fill="#fff"/>
<path d="M223.5 8.0 V16.0 M225.5 8.0 V16.0" stroke="#777" stroke-width="0.7"/>
<rect x="6" y="25.0" width="4.5" height="604.0" fill="#cfcfcf"/>
<rect x="6" y="186.0" width="4.5" height="403.0" fill="#a3a3a3"/>
<rect x="57.0" y="25.5" width="40.5" height="14" fill="#efefef" opacity="0.92"/>
<rect x="59.5" y="26.7" width="11.5" height="11.5" fill="#2f5f9e"/><rect x="61" y="28.2" width="8.5" height="8.5" fill="#dfe9f5"/><path d="M62.5 29.5 V35.0 H68 M63 34.5 L67.5 30.0" stroke="#2f5f9e" stroke-width="0.9" fill="none"/>
<rect x="57.0" y="43.5" width="40.5" height="14" fill="#efefef" opacity="0.92"/>
<rect x="59.5" y="44.7" width="11.5" height="11.5" fill="#2f5f9e"/><rect x="61" y="46.2" width="8.5" height="8.5" fill="#dfe9f5"/><path d="M62.5 47.5 V53.0 H68 M63 52.5 L67.5 48.0" stroke="#2f5f9e" stroke-width="0.9" fill="none"/>
<rect x="57.0" y="61.5" width="40.5" height="14" fill="#efefef" opacity="0.92"/>
<rect x="59.5" y="62.7" width="11.5" height="11.5" fill="#2f5f9e"/><rect x="61" y="64.2" width="8.5" height="8.5" fill="#dfe9f5"/><path d="M62.5 65.5 V71.0 H68 M63 70.5 L67.5 66.0" stroke="#2f5f9e" stroke-width="0.9" fill="none"/>
<rect x="57.0" y="79.5" width="52.0" height="14" fill="#efefef" opacity="0.92"/>
<rect x="59.5" y="80.7" width="11.5" height="11.5" fill="#2f5f9e"/><rect x="61" y="82.2" width="8.5" height="8.5" fill="#dfe9f5"/><path d="M62.5 83.5 V89.0 H68 M63 88.5 L67.5 84.0" stroke="#2f5f9e" stroke-width="0.9" fill="none"/>
<rect x="44.0" y="97.5" width="64.0" height="14" fill="#efefef" opacity="0.92"/>
<path d="M30.5 100.0 L36.5 104.5 L30.5 109.0 Z" fill="#fff" stroke="#333" stroke-width="1"/>
<path d="M46.0 100.0 H50.0 L51.0 101.0 H57.5 V109.0 H46.0 Z" fill="#8e8e8e"/>
<rect x="44.0" y="115.5" width="68.0" height="14" fill="#efefef" opacity="0.92"/>
<path d="M29.5 126.5 L37.5 118.5 V126.5 Z" fill="#777" stroke="#333" stroke-width="0.8"/>
<path d="M46.5 122.5 Q51.5 117.5 56.5 122.5 Q51.5 127.5 46.5 122.5 Z" fill="#dedede"/><circle cx="51.5" cy="122.5" r="1.6" fill="#efefef"/>
<path d="M47 118.5 L56 126.5" stroke="#dedede" stroke-width="1"/>
<path d="M64.5 118.0 H68.5 L69.5 119.0 H76.0 V127.0 H64.5 Z" fill="#8e8e8e"/>
<rect x="57.0" y="133.5" width="55.6" height="14" fill="#efefef" opacity="0.92"/>
<path d="M59.5 140.5 Q65 135.0 70.5 140.5 Q65 146.0 59.5 140.5 Z" fill="#8c8c8c"/><circle cx="65" cy="140.5" r="1.7" fill="#efefef"/>
<circle cx="83.5" cy="140.5" r="2.8" fill="none" stroke="#e0782c" stroke-width="1.6"/><path d="M83.5 135.0 V146.0 M78 140.5 H89" stroke="#e0782c" stroke-width="1"/>
<rect x="57.0" y="151.5" width="55.6" height="14" fill="#efefef" opacity="0.92"/>
<path d="M59.5 158.5 Q65 153.0 70.5 158.5 Q65 164.0 59.5 158.5 Z" fill="#8c8c8c"/><circle cx="65" cy="158.5" r="1.7" fill="#efefef"/>
<path d="M80.5 153.5 H88.5 V161.5" fill="none" stroke="#777" stroke-width="0.9"/><path d="M88.5 161.5 H82.5" stroke="#777" stroke-width="0.9"/><path d="M78.5 164.0 L86 157.5" stroke="#e58a4a" stroke-width="1"/>
<rect x="57.0" y="169.5" width="55.6" height="14" fill="#efefef" opacity="0.92"/>
<path d="M59.5 176.5 Q65 171.0 70.5 176.5 Q65 182.0 59.5 176.5 Z" fill="#8c8c8c"/><circle cx="65" cy="176.5" r="1.7" fill="#efefef"/>
<path d="M80.5 171.5 H88.5 V179.5" fill="none" stroke="#777" stroke-width="0.9"/><path d="M88.5 179.5 H82.5" stroke="#777" stroke-width="0.9"/><path d="M78.5 182.0 L86 175.5" stroke="#e58a4a" stroke-width="1"/>
<rect x="57.0" y="187.5" width="55.6" height="14" fill="#efefef" opacity="0.92"/>
<path d="M59.5 194.5 Q65 189.0 70.5 194.5 Q65 200.0 59.5 194.5 Z" fill="#8c8c8c"/><circle cx="65" cy="194.5" r="1.7" fill="#efefef"/>
<path d="M80.5 189.5 H88.5 V197.5" fill="none" stroke="#777" stroke-width="0.9"/><path d="M88.5 197.5 H82.5" stroke="#777" stroke-width="0.9"/><path d="M78.5 200.0 L86 193.5" stroke="#e58a4a" stroke-width="1"/>
<rect x="57.0" y="205.5" width="61.0" height="14" fill="#efefef" opacity="0.92"/>
<path d="M59.5 212.5 Q65 207.0 70.5 212.5 Q65 218.0 59.5 212.5 Z" fill="#8c8c8c"/><circle cx="65" cy="212.5" r="1.7" fill="#efefef"/>
<path d="M81.5 207.0 H89.5 V215.0" fill="none" stroke="#666" stroke-width="0.9"/><rect x="78.5" y="210.0" width="8" height="8" fill="#e58a4a"/>
<rect x="57.0" y="223.5" width="61.0" height="14" fill="#efefef" opacity="0.92"/>
<path d="M59.5 230.5 Q65 225.0 70.5 230.5 Q65 236.0 59.5 230.5 Z" fill="#8c8c8c"/><circle cx="65" cy="230.5" r="1.7" fill="#efefef"/>
<path d="M81.5 225.0 H89.5 V233.0" fill="none" stroke="#666" stroke-width="0.9"/><rect x="78.5" y="228.0" width="8" height="8" fill="#e58a4a"/>
<rect x="57.0" y="241.5" width="61.0" height="14" fill="#efefef" opacity="0.92"/>
<path d="M59.5 248.5 Q65 243.0 70.5 248.5 Q65 254.0 59.5 248.5 Z" fill="#8c8c8c"/><circle cx="65" cy="248.5" r="1.7" fill="#efefef"/>
<path d="M81.5 243.0 H89.5 V251.0" fill="none" stroke="#666" stroke-width="0.9"/><rect x="78.5" y="246.0" width="8" height="8" fill="#e58a4a"/>
<rect x="44.0" y="259.5" width="68.0" height="14" fill="#efefef" opacity="0.92"/>
<path d="M30.5 262.0 L36.5 266.5 L30.5 271.0 Z" fill="#fff" stroke="#333" stroke-width="1"/>
<path d="M46.5 266.5 Q51.5 261.5 56.5 266.5 Q51.5 271.5 46.5 266.5 Z" fill="#8c8c8c"/><circle cx="51.5" cy="266.5" r="1.6" fill="#efefef"/>
<path d="M64.5 262.0 H68.5 L69.5 263.0 H76.0 V271.0 H64.5 Z" fill="#8e8e8e"/>
<rect x="44.0" y="277.5" width="73.5" height="14" fill="#efefef" opacity="0.92"/>
<path d="M29.5 288.5 L37.5 280.5 V288.5 Z" fill="#777" stroke="#333" stroke-width="0.8"/>
<path d="M46.5 284.5 Q51.5 279.5 56.5 284.5 Q51.5 289.5 46.5 284.5 Z" fill="#8c8c8c"/><circle cx="51.5" cy="284.5" r="1.6" fill="#efefef"/>
<path d="M64.5 280.0 H68.5 L69.5 281.0 H76.0 V289.0 H64.5 Z" fill="#8e8e8e"/>
<rect x="57.0" y="295.5" width="76.6" height="14" fill="#efefef" opacity="0.92"/>
<path d="M59.5 302.5 Q65 297.0 70.5 302.5 Q65 308.0 59.5 302.5 Z" fill="#dcdcdc"/><circle cx="65" cy="302.5" r="1.7" fill="#efefef"/>
<path d="M60 298.0 L70 307.0" stroke="#dcdcdc" stroke-width="1"/>
<path d="M78.5 297.0 V308.0 M78.5 297.0 H89 V302.5 M78.5 308.0 H84" fill="none" stroke="#555" stroke-width="0.9" stroke-dasharray="2 1"/>
<rect x="84.5" y="304.0" width="5.5" height="4.5" fill="#d42a2a"/><path d="M85.8 304.0 V302.0 Q87.25 300.7 88.7 302.0 V304.0" fill="none" stroke="#d42a2a" stroke-width="0.9"/>
<rect x="57.0" y="313.5" width="79.7" height="14" fill="#efefef" opacity="0.92"/>
<path d="M59.5 320.5 Q65 315.0 70.5 320.5 Q65 326.0 59.5 320.5 Z" fill="#dcdcdc"/><circle cx="65" cy="320.5" r="1.7" fill="#efefef"/>
<path d="M60 316.0 L70 325.0" stroke="#dcdcdc" stroke-width="1"/>
<path d="M78.5 315.0 V326.0 M78.5 315.0 H89 V320.5 M78.5 326.0 H84" fill="none" stroke="#555" stroke-width="0.9" stroke-dasharray="2 1"/>
<rect x="84.5" y="322.0" width="5.5" height="4.5" fill="#d42a2a"/><path d="M85.8 322.0 V320.0 Q87.25 318.7 88.7 320.0 V322.0" fill="none" stroke="#d42a2a" stroke-width="0.9"/>
<rect x="57.0" y="331.5" width="79.7" height="14" fill="#efefef" opacity="0.92"/>
<path d="M59.5 338.5 Q65 333.0 70.5 338.5 Q65 344.0 59.5 338.5 Z" fill="#dcdcdc"/><circle cx="65" cy="338.5" r="1.7" fill="#efefef"/>
<path d="M60 334.0 L70 343.0" stroke="#dcdcdc" stroke-width="1"/>
<path d="M78.5 333.0 V344.0 M78.5 333.0 H89 V338.5 M78.5 344.0 H84" fill="none" stroke="#555" stroke-width="0.9" stroke-dasharray="2 1"/>
<rect x="84.5" y="340.0" width="5.5" height="4.5" fill="#d42a2a"/><path d="M85.8 340.0 V338.0 Q87.25 336.7 88.7 338.0 V340.0" fill="none" stroke="#d42a2a" stroke-width="0.9"/>
<rect x="57.0" y="349.5" width="79.7" height="14" fill="#efefef" opacity="0.92"/>
<path d="M59.5 356.5 Q65 351.0 70.5 356.5 Q65 362.0 59.5 356.5 Z" fill="#dcdcdc"/><circle cx="65" cy="356.5" r="1.7" fill="#efefef"/>
<path d="M60 352.0 L70 361.0" stroke="#dcdcdc" stroke-width="1"/>
<path d="M78.5 351.0 V362.0 M78.5 351.0 H89 V356.5 M78.5 362.0 H84" fill="none" stroke="#555" stroke-width="0.9" stroke-dasharray="2 1"/>
<rect x="84.5" y="358.0" width="5.5" height="4.5" fill="#d42a2a"/><path d="M85.8 358.0 V356.0 Q87.25 354.7 88.7 356.0 V358.0" fill="none" stroke="#d42a2a" stroke-width="0.9"/>
<rect x="57.0" y="367.5" width="79.7" height="14" fill="#efefef" opacity="0.92"/>
<path d="M59.5 374.5 Q65 369.0 70.5 374.5 Q65 380.0 59.5 374.5 Z" fill="#dcdcdc"/><circle cx="65" cy="374.5" r="1.7" fill="#efefef"/>
<path d="M60 370.0 L70 379.0" stroke="#dcdcdc" stroke-width="1"/>
<path d="M78.5 369.0 V380.0 M78.5 369.0 H89 V374.5 M78.5 380.0 H84" fill="none" stroke="#555" stroke-width="0.9" stroke-dasharray="2 1"/>
<rect x="84.5" y="376.0" width="5.5" height="4.5" fill="#d42a2a"/><path d="M85.8 376.0 V374.0 Q87.25 372.7 88.7 374.0 V376.0" fill="none" stroke="#d42a2a" stroke-width="0.9"/>
<rect x="57.0" y="385.5" width="79.7" height="14" fill="#efefef" opacity="0.92"/>
<path d="M59.5 392.5 Q65 387.0 70.5 392.5 Q65 398.0 59.5 392.5 Z" fill="#dcdcdc"/><circle cx="65" cy="392.5" r="1.7" fill="#efefef"/>
<path d="M60 388.0 L70 397.0" stroke="#dcdcdc" stroke-width="1"/>
<path d="M78.5 387.0 V398.0 M78.5 387.0 H89 V392.5 M78.5 398.0 H84" fill="none" stroke="#555" stroke-width="0.9" stroke-dasharray="2 1"/>
<rect x="84.5" y="394.0" width="5.5" height="4.5" fill="#d42a2a"/><path d="M85.8 394.0 V392.0 Q87.25 390.7 88.7 392.0 V394.0" fill="none" stroke="#d42a2a" stroke-width="0.9"/>
<rect x="57.0" y="403.5" width="79.7" height="14" fill="#efefef" opacity="0.92"/>
<path d="M59.5 410.5 Q65 405.0 70.5 410.5 Q65 416.0 59.5 410.5 Z" fill="#dcdcdc"/><circle cx="65" cy="410.5" r="1.7" fill="#efefef"/>
<path d="M60 406.0 L70 415.0" stroke="#dcdcdc" stroke-width="1"/>
<path d="M78.5 405.0 V416.0 M78.5 405.0 H89 V410.5 M78.5 416.0 H84" fill="none" stroke="#555" stroke-width="0.9" stroke-dasharray="2 1"/>
<rect x="84.5" y="412.0" width="5.5" height="4.5" fill="#d42a2a"/><path d="M85.8 412.0 V410.0 Q87.25 408.7 88.7 410.0 V412.0" fill="none" stroke="#d42a2a" stroke-width="0.9"/>
<rect x="57.0" y="421.5" width="79.7" height="14" fill="#efefef" opacity="0.92"/>
<path d="M59.5 428.5 Q65 423.0 70.5 428.5 Q65 434.0 59.5 428.5 Z" fill="#dcdcdc"/><circle cx="65" cy="428.5" r="1.7" fill="#efefef"/>
<path d="M60 424.0 L70 433.0" stroke="#dcdcdc" stroke-width="1"/>
<path d="M78.5 423.0 V434.0 M78.5 423.0 H89 V428.5 M78.5 434.0 H84" fill="none" stroke="#555" stroke-width="0.9" stroke-dasharray="2 1"/>
<rect x="84.5" y="430.0" width="5.5" height="4.5" fill="#d42a2a"/><path d="M85.8 430.0 V428.0 Q87.25 426.7 88.7 428.0 V430.0" fill="none" stroke="#d42a2a" stroke-width="0.9"/>
<rect x="57.0" y="439.5" width="79.7" height="14" fill="#efefef" opacity="0.92"/>
<path d="M59.5 446.5 Q65 441.0 70.5 446.5 Q65 452.0 59.5 446.5 Z" fill="#dcdcdc"/><circle cx="65" cy="446.5" r="1.7" fill="#efefef"/>
<path d="M60 442.0 L70 451.0" stroke="#dcdcdc" stroke-width="1"/>
<path d="M78.5 441.0 V452.0 M78.5 441.0 H89 V446.5 M78.5 452.0 H84" fill="none" stroke="#555" stroke-width="0.9" stroke-dasharray="2 1"/>
<rect x="84.5" y="448.0" width="5.5" height="4.5" fill="#d42a2a"/><path d="M85.8 448.0 V446.0 Q87.25 444.7 88.7 446.0 V448.0" fill="none" stroke="#d42a2a" stroke-width="0.9"/>
<rect x="57.0" y="457.5" width="83.0" height="14" fill="#efefef" opacity="0.92"/>
<path d="M59.5 464.5 Q65 459.0 70.5 464.5 Q65 470.0 59.5 464.5 Z" fill="#dcdcdc"/><circle cx="65" cy="464.5" r="1.7" fill="#efefef"/>
<path d="M60 460.0 L70 469.0" stroke="#dcdcdc" stroke-width="1"/>
<path d="M78.5 459.0 V470.0 M78.5 459.0 H89 V464.5 M78.5 470.0 H84" fill="none" stroke="#555" stroke-width="0.9" stroke-dasharray="2 1"/>
<rect x="84.5" y="466.0" width="5.5" height="4.5" fill="#d42a2a"/><path d="M85.8 466.0 V464.0 Q87.25 462.7 88.7 464.0 V466.0" fill="none" stroke="#d42a2a" stroke-width="0.9"/>
<rect x="57.0" y="475.5" width="83.0" height="14" fill="#efefef" opacity="0.92"/>
<path d="M59.5 482.5 Q65 477.0 70.5 482.5 Q65 488.0 59.5 482.5 Z" fill="#dcdcdc"/><circle cx="65" cy="482.5" r="1.7" fill="#efefef"/>
<path d="M60 478.0 L70 487.0" stroke="#dcdcdc" stroke-width="1"/>
<path d="M78.5 477.0 V488.0 M78.5 477.0 H89 V482.5 M78.5 488.0 H84" fill="none" stroke="#555" stroke-width="0.9" stroke-dasharray="2 1"/>
<rect x="84.5" y="484.0" width="5.5" height="4.5" fill="#d42a2a"/><path d="M85.8 484.0 V482.0 Q87.25 480.7 88.7 482.0 V484.0" fill="none" stroke="#d42a2a" stroke-width="0.9"/>
<rect x="57.0" y="493.5" width="83.0" height="14" fill="#efefef" opacity="0.92"/>
<path d="M59.5 500.5 Q65 495.0 70.5 500.5 Q65 506.0 59.5 500.5 Z" fill="#dcdcdc"/><circle cx="65" cy="500.5" r="1.7" fill="#efefef"/>
<path d="M60 496.0 L70 505.0" stroke="#dcdcdc" stroke-width="1"/>
<path d="M78.5 495.0 V506.0 M78.5 495.0 H89 V500.5 M78.5 506.0 H84" fill="none" stroke="#555" stroke-width="0.9" stroke-dasharray="2 1"/>
<path d="M84 505.5 L89.5 500.0" stroke="#f0a020" stroke-width="1.8"/><circle cx="78.5" cy="495.0" r="1" fill="#2a7fd4"/><circle cx="89" cy="495.0" r="1" fill="#2a7fd4"/>
<rect x="57.0" y="511.5" width="83.0" height="14" fill="#efefef" opacity="0.92"/>
<path d="M59.5 518.5 Q65 513.0 70.5 518.5 Q65 524.0 59.5 518.5 Z" fill="#dcdcdc"/><circle cx="65" cy="518.5" r="1.7" fill="#efefef"/>
<path d="M60 514.0 L70 523.0" stroke="#dcdcdc" stroke-width="1"/>
<path d="M78.5 513.0 V524.0 M78.5 513.0 H89 V518.5 M78.5 524.0 H84" fill="none" stroke="#555" stroke-width="0.9" stroke-dasharray="2 1"/>
<rect x="84.5" y="520.0" width="5.5" height="4.5" fill="#d42a2a"/><path d="M85.8 520.0 V518.0 Q87.25 516.7 88.7 518.0 V520.0" fill="none" stroke="#d42a2a" stroke-width="0.9"/>
<rect x="57.0" y="529.5" width="83.0" height="14" fill="#efefef" opacity="0.92"/>
<path d="M59.5 536.5 Q65 531.0 70.5 536.5 Q65 542.0 59.5 536.5 Z" fill="#dcdcdc"/><circle cx="65" cy="536.5" r="1.7" fill="#efefef"/>
<path d="M60 532.0 L70 541.0" stroke="#dcdcdc" stroke-width="1"/>
<path d="M78.5 531.0 V542.0 M78.5 531.0 H89 V536.5 M78.5 542.0 H84" fill="none" stroke="#555" stroke-width="0.9" stroke-dasharray="2 1"/>
<path d="M84 541.5 L89.5 536.0" stroke="#f0a020" stroke-width="1.8"/><circle cx="78.5" cy="531.0" r="1" fill="#2a7fd4"/><circle cx="89" cy="531.0" r="1" fill="#2a7fd4"/>
<rect x="57.0" y="547.5" width="83.0" height="14" fill="#efefef" opacity="0.92"/>
<path d="M59.5 554.5 Q65 549.0 70.5 554.5 Q65 560.0 59.5 554.5 Z" fill="#dcdcdc"/><circle cx="65" cy="554.5" r="1.7" fill="#efefef"/>
<path d="M60 550.0 L70 559.0" stroke="#dcdcdc" stroke-width="1"/>
<path d="M78.5 549.0 V560.0 M78.5 549.0 H89 V554.5 M78.5 560.0 H84" fill="none" stroke="#555" stroke-width="0.9" stroke-dasharray="2 1"/>
<path d="M84 559.5 L89.5 554.0" stroke="#f0a020" stroke-width="1.8"/><circle cx="78.5" cy="549.0" r="1" fill="#2a7fd4"/><circle cx="89" cy="549.0" r="1" fill="#2a7fd4"/>
<rect x="44.0" y="565.5" width="103.0" height="14" fill="#efefef" opacity="0.92"/>
<path d="M29.5 576.5 L37.5 568.5 V576.5 Z" fill="#777" stroke="#333" stroke-width="0.8"/>
<path d="M46.5 572.5 Q51.5 567.5 56.5 572.5 Q51.5 577.5 46.5 572.5 Z" fill="#8c8c8c"/><circle cx="51.5" cy="572.5" r="1.6" fill="#efefef"/>
<path d="M64.5 568.0 H68.5 L69.5 569.0 H76.0 V577.0 H64.5 Z" fill="#8e8e8e"/>
<rect x="57.0" y="583.5" width="66.0" height="14" fill="#efefef" opacity="0.92"/>
<path d="M59.5 590.5 Q65 585.0 70.5 590.5 Q65 596.0 59.5 590.5 Z" fill="#dcdcdc"/><circle cx="65" cy="590.5" r="1.7" fill="#efefef"/>
<path d="M60 586.0 L70 595.0" stroke="#dcdcdc" stroke-width="1"/>
<path d="M81.5 585.0 H89.5 V593.0" fill="none" stroke="#666" stroke-width="0.9"/><rect x="78.5" y="588.0" width="8" height="8" fill="#e58a4a"/>
<rect x="57.0" y="601.5" width="66.0" height="14" fill="#efefef" opacity="0.92"/>
<path d="M59.5 608.5 Q65 603.0 70.5 608.5 Q65 614.0 59.5 608.5 Z" fill="#dcdcdc"/><circle cx="65" cy="608.5" r="1.7" fill="#efefef"/>
<path d="M60 604.0 L70 613.0" stroke="#dcdcdc" stroke-width="1"/>
<path d="M81.5 603.0 H89.5 V611.0" fill="none" stroke="#666" stroke-width="0.9"/><rect x="78.5" y="606.0" width="8" height="8" fill="#e58a4a"/>
<rect x="57.0" y="619.5" width="66.0" height="14" fill="#efefef" opacity="0.92"/>
<path d="M59.5 626.5 Q65 621.0 70.5 626.5 Q65 632.0 59.5 626.5 Z" fill="#dcdcdc"/><circle cx="65" cy="626.5" r="1.7" fill="#efefef"/>
<path d="M60 622.0 L70 631.0" stroke="#dcdcdc" stroke-width="1"/>
<path d="M81.5 621.0 H89.5 V629.0" fill="none" stroke="#666" stroke-width="0.9"/><rect x="78.5" y="624.0" width="8" height="8" fill="#e58a4a"/>
<rect x="3.5" y="648.5" width="224" height="18" fill="#f0f0f0" stroke="#cdcdcd" stroke-width="1"/>
<circle cx="215.5" cy="657.5" r="3.6" fill="#222"/><path d="M213.3 657.5 H217.7 M215.5 655.3 V659.7" stroke="#fff" stroke-width="1.1"/>
<path d="M223.5 653.0 V662.0 M225.5 653.0 V662.0" stroke="#777" stroke-width="0.7"/>
</svg>
<div class="t" style="left:21.5px;top:109px;font-size:9px;color:#444">ブラウザ</div>
<div class="t" style="left:21.5px;top:754px;font-size:9px;color:#444">コメント</div>
<div class="t" style="left:81.5px;top:130.0px;font-size:8.5px;line-height:10px;color:#222">上</div>
<div class="t" style="left:81.5px;top:148.0px;font-size:8.5px;line-height:10px;color:#222">前</div>
<div class="t" style="left:81.5px;top:166.0px;font-size:8.5px;line-height:10px;color:#222">右</div>
<div class="t" style="left:81.5px;top:184.0px;font-size:8.5px;line-height:10px;color:#222">ホーム</div>
<div class="t" style="left:67.5px;top:202.0px;font-size:8.5px;line-height:10px;color:#222">選択セット</div>
<div class="t" style="left:86.5px;top:220.0px;font-size:8.5px;line-height:10px;color:#222">原点</div>
<div class="t" style="left:100.0px;top:238.0px;font-size:8.5px;line-height:10px;color:#2a4b7c">O</div>
<div class="t" style="left:100.0px;top:256.0px;font-size:8.5px;line-height:10px;color:#2a4b7c">X</div>
<div class="t" style="left:100.0px;top:274.0px;font-size:8.5px;line-height:10px;color:#2a4b7c">Y</div>
<div class="t" style="left:100.0px;top:292.0px;font-size:8.5px;line-height:10px;color:#2a4b7c">Z</div>
<div class="t" style="left:100.0px;top:310.0px;font-size:8.5px;line-height:10px;color:#2a4b7c">XY</div>
<div class="t" style="left:100.0px;top:328.0px;font-size:8.5px;line-height:10px;color:#2a4b7c">XZ</div>
<div class="t" style="left:100.0px;top:346.0px;font-size:8.5px;line-height:10px;color:#2a4b7c">YZ</div>
<div class="t" style="left:86.5px;top:364.0px;font-size:8.5px;line-height:10px;color:#222">ボディ</div>
<div class="t" style="left:86.5px;top:382.0px;font-size:8.5px;line-height:10px;color:#222">スケッチ</div>
<div class="t" style="left:99.5px;top:400.0px;font-size:8.5px;line-height:10px;color:#222">スケッチ 1</div>
<div class="t" style="left:99.5px;top:418.0px;font-size:8.5px;line-height:10px;color:#222">スケッチ 3</div>
<div class="t" style="left:99.5px;top:436.0px;font-size:8.5px;line-height:10px;color:#222">スケッチ 4</div>
<div class="t" style="left:99.5px;top:454.0px;font-size:8.5px;line-height:10px;color:#222">スケッチ 2</div>
<div class="t" style="left:99.5px;top:472.0px;font-size:8.5px;line-height:10px;color:#222">スケッチ 6</div>
<div class="t" style="left:99.5px;top:490.0px;font-size:8.5px;line-height:10px;color:#222">スケッチ 5</div>
<div class="t" style="left:99.5px;top:508.0px;font-size:8.5px;line-height:10px;color:#222">スケッチ 7</div>
<div class="t" style="left:99.5px;top:526.0px;font-size:8.5px;line-height:10px;color:#222">スケッチ 8</div>
<div class="t" style="left:99.5px;top:544.0px;font-size:8.5px;line-height:10px;color:#222">スケッチ 9</div>
<div class="t" style="left:99.5px;top:562.0px;font-size:8.5px;line-height:10px;color:#222">スケッチ 10</div>
<div class="t" style="left:99.5px;top:580.0px;font-size:8.5px;line-height:10px;color:#222">スケッチ 11</div>
<div class="t" style="left:99.5px;top:598.0px;font-size:8.5px;line-height:10px;color:#222">スケッチ 12</div>
<div class="t" style="left:99.5px;top:616.0px;font-size:8.5px;line-height:10px;color:#222">スケッチ 13</div>
<div class="t" style="left:99.5px;top:634.0px;font-size:8.5px;line-height:10px;color:#222">スケッチ 14</div>
<div class="t" style="left:99.5px;top:652.0px;font-size:8.5px;line-height:10px;color:#222">スケッチ 15</div>
<div class="t" style="left:86.5px;top:670.0px;font-size:8.5px;line-height:10px;color:#222">コンストラクション</div>
<div class="t" style="left:99.5px;top:688.0px;font-size:8.5px;line-height:10px;color:#222">平面2</div>
<div class="t" style="left:99.5px;top:706.0px;font-size:8.5px;line-height:10px;color:#222">平面3</div>
<div class="t" style="left:99.5px;top:724.0px;font-size:8.5px;line-height:10px;color:#222">平面4</div>
<svg class="a" style="left:0;top:772px" width="1394" height="38">
<rect x="0" y="0" width="1394" height="2" fill="#cdcdcd"/><rect x="0" y="2" width="1394" height="36" fill="#f0f0f0"/>
<g fill="#333"><rect x="8" y="15.5" width="1.6" height="9.5"/><path d="M17 15.5 V25.0 L9.6 20.2 Z"/>
<path d="M34.5 15.5 V25.0 L27 20.2 Z"/><rect x="34.5" y="17.8" width="1.5" height="5"/>
<path d="M46 15.3 V25.0 L54.7 20.2 Z"/>
<rect x="63.5" y="17.8" width="1.5" height="5"/><path d="M65 15.5 V25.0 L72.8 20.2 Z"/>
<path d="M83 15.5 V25.0 L90.6 20.2 Z"/><rect x="91" y="15.5" width="1.6" height="9.5"/></g>
<g transform="translate(115.5 20.0)"><path d="M-5.5 -3 Q-5.5 -6 -2.5 -6 H3 Q5.5 -6 5.5 -3 V3 Q5.5 6 2.5 6 H-2.5 Q-5.5 6 -5.5 3 Z" fill="#9b6fd8"/><path d="M-3 -2 H3 V4 H-3Z" fill="#b996ea"/></g>
<path d="M115.5 28.0 V31.5" stroke="#bdbdbd" stroke-width="1"/>
<g transform="translate(133.5 20.0)"><path d="M-5.5 -5.5 H5 M-5.5 -5.5 V5.5 H1 M5 -5.5 V0" fill="none" stroke="#555" stroke-width="0.8" stroke-dasharray="1.6 1"/><circle cx="-5.5" cy="-5.5" r="0.9" fill="#2a7fd4"/><circle cx="5" cy="-5.5" r="0.9" fill="#2a7fd4"/><circle cx="-5.5" cy="5.5" r="0.9" fill="#2a7fd4"/><path d="M1 5 L6 0" stroke="#f0a020" stroke-width="1.6"/><circle cx="6.2" cy="-0.3" r="0.8" fill="#e03030"/></g>
<path d="M133.5 28.0 V31.5" stroke="#bdbdbd" stroke-width="1"/>
<g transform="translate(151.5 20.0)"><path d="M-5.5 -3 L-3 -5.5 H3.5 V4 L1 6.5 H-5.5 Z" fill="#5fa7e3"/><path d="M1 -3 L3.5 -5.5 V4 L1 6.5Z" fill="#3a82c4"/><path d="M5.5 -5 V6" stroke="#333" stroke-width="0.8"/><path d="M-5.5 6.5 H1" stroke="#999" stroke-width="1"/></g>
<path d="M151.5 28.0 V31.5" stroke="#bdbdbd" stroke-width="1"/>
<g transform="translate(169.5 20.0)"><path d="M-5.5 -5.5 H5 M-5.5 -5.5 V5.5 H1 M5 -5.5 V0" fill="none" stroke="#555" stroke-width="0.8" stroke-dasharray="1.6 1"/><circle cx="-5.5" cy="-5.5" r="0.9" fill="#2a7fd4"/><circle cx="5" cy="-5.5" r="0.9" fill="#2a7fd4"/><circle cx="-5.5" cy="5.5" r="0.9" fill="#2a7fd4"/><path d="M1 5 L6 0" stroke="#f0a020" stroke-width="1.6"/><circle cx="6.2" cy="-0.3" r="0.8" fill="#e03030"/></g>
<path d="M169.5 28.0 V31.5" stroke="#bdbdbd" stroke-width="1"/>
<g transform="translate(187.5 20.0)"><path d="M-5.5 -2 L-2.5 -6 H0 V6 H-5.5Z" fill="#e3e3e3" stroke="#777" stroke-width="0.5"/><path d="M-2.5 -2 L0 -6 V3.5 L-2.5 6Z" fill="#57b36a"/><path d="M2.5 -3 L6 -5.5 V3.5 L2.5 6Z" fill="#e58e55"/></g>
<path d="M187.5 28.0 V31.5" stroke="#bdbdbd" stroke-width="1"/>
<g transform="translate(205.5 20.0)"><path d="M-5.5 -5.5 H5 M-5.5 -5.5 V5.5 H1 M5 -5.5 V0" fill="none" stroke="#555" stroke-width="0.8" stroke-dasharray="1.6 1"/><circle cx="-5.5" cy="-5.5" r="0.9" fill="#2a7fd4"/><circle cx="5" cy="-5.5" r="0.9" fill="#2a7fd4"/><circle cx="-5.5" cy="5.5" r="0.9" fill="#2a7fd4"/><path d="M1 5 L6 0" stroke="#f0a020" stroke-width="1.6"/><circle cx="6.2" cy="-0.3" r="0.8" fill="#e03030"/></g>
<path d="M205.5 28.0 V31.5" stroke="#bdbdbd" stroke-width="1"/>
<g transform="translate(223.5 20.0)"><path d="M-6 -3 Q-6 -6 -2 -6 H2 Q5 -6 5 -3 V1 H-6Z" fill="#5fa7e3"/><rect x="-2" y="0" width="7" height="5.5" fill="#fff" stroke="#333" stroke-width="0.8"/></g>
<path d="M223.5 28.0 V31.5" stroke="#bdbdbd" stroke-width="1"/>
<g transform="translate(241.5 20.0)"><path d="M-5.5 -2.5 L-2.5 -5.5 H1 Q6 -4 6 1 V3 L3 6 H-5.5Z" fill="#d8d8d8" stroke="#777" stroke-width="0.6"/><path d="M1 -5.5 Q6 -4 6 1 L4 2 Q4 -2 0 -3.5Z" fill="#5fa7e3"/></g>
<path d="M241.5 28.0 V31.5" stroke="#bdbdbd" stroke-width="1"/>
<g transform="translate(259.5 20.0)"><path d="M-5.5 -5.5 H5 M-5.5 -5.5 V5.5 H1 M5 -5.5 V0" fill="none" stroke="#555" stroke-width="0.8" stroke-dasharray="1.6 1"/><circle cx="-5.5" cy="-5.5" r="0.9" fill="#2a7fd4"/><circle cx="5" cy="-5.5" r="0.9" fill="#2a7fd4"/><circle cx="-5.5" cy="5.5" r="0.9" fill="#2a7fd4"/><path d="M1 5 L6 0" stroke="#f0a020" stroke-width="1.6"/><circle cx="6.2" cy="-0.3" r="0.8" fill="#e03030"/></g>
<path d="M259.5 28.0 V31.5" stroke="#bdbdbd" stroke-width="1"/>
<g transform="translate(277.5 20.0)"><path d="M-5.5 -3 L-3 -5.5 H3.5 V4 L1 6.5 H-5.5 Z" fill="#5fa7e3"/><path d="M1 -3 L3.5 -5.5 V4 L1 6.5Z" fill="#3a82c4"/><path d="M5.5 -5 V6" stroke="#333" stroke-width="0.8"/><path d="M-5.5 6.5 H1" stroke="#999" stroke-width="1"/></g>
<path d="M277.5 28.0 V31.5" stroke="#bdbdbd" stroke-width="1"/>
<g transform="translate(295.5 20.0)"><path d="M-5.5 -5.5 H5 M-5.5 -5.5 V5.5 H1 M5 -5.5 V0" fill="none" stroke="#555" stroke-width="0.8" stroke-dasharray="1.6 1"/><circle cx="-5.5" cy="-5.5" r="0.9" fill="#2a7fd4"/><circle cx="5" cy="-5.5" r="0.9" fill="#2a7fd4"/><circle cx="-5.5" cy="5.5" r="0.9" fill="#2a7fd4"/><path d="M1 5 L6 0" stroke="#f0a020" stroke-width="1.6"/><circle cx="6.2" cy="-0.3" r="0.8" fill="#e03030"/></g>
<path d="M295.5 28.0 V31.5" stroke="#bdbdbd" stroke-width="1"/>
<g transform="translate(313.5 20.0)"><path d="M-5.5 -2 L-2.5 -6 H0 V6 H-5.5Z" fill="#e3e3e3" stroke="#777" stroke-width="0.5"/><path d="M-2.5 -2 L0 -6 V3.5 L-2.5 6Z" fill="#57b36a"/><path d="M2.5 -3 L6 -5.5 V3.5 L2.5 6Z" fill="#e58e55"/></g>
<path d="M313.5 28.0 V31.5" stroke="#bdbdbd" stroke-width="1"/>
<g transform="translate(331.5 20.0)"><path d="M-5.5 -5.5 H5 M-5.5 -5.5 V5.5 H1 M5 -5.5 V0" fill="none" stroke="#555" stroke-width="0.8" stroke-dasharray="1.6 1"/><circle cx="-5.5" cy="-5.5" r="0.9" fill="#2a7fd4"/><circle cx="5" cy="-5.5" r="0.9" fill="#2a7fd4"/><circle cx="-5.5" cy="5.5" r="0.9" fill="#2a7fd4"/><path d="M1 5 L6 0" stroke="#f0a020" stroke-width="1.6"/><circle cx="6.2" cy="-0.3" r="0.8" fill="#e03030"/></g>
<path d="M331.5 28.0 V31.5" stroke="#bdbdbd" stroke-width="1"/>
<g transform="translate(349.5 20.0)"><path d="M-6 -6 H6 V0 Q3 4 0 4 Q-3 4 -6 0Z" fill="#5fa7e3"/><circle cx="0" cy="3" r="2.8" fill="#fff" stroke="#333" stroke-width="0.8"/></g>
<path d="M349.5 28.0 V31.5" stroke="#bdbdbd" stroke-width="1"/>
<g transform="translate(367.5 20.0)"><path d="M-5.5 -2.5 L-2.5 -5.5 H1 Q6 -4 6 1 V3 L3 6 H-5.5Z" fill="#d8d8d8" stroke="#777" stroke-width="0.6"/><path d="M1 -5.5 Q6 -4 6 1 L4 2 Q4 -2 0 -3.5Z" fill="#5fa7e3"/></g>
<path d="M367.5 28.0 V31.5" stroke="#bdbdbd" stroke-width="1"/>
<g transform="translate(385.5 20.0)"><path d="M-5.5 -5.5 H5 M-5.5 -5.5 V5.5 H1 M5 -5.5 V0" fill="none" stroke="#555" stroke-width="0.8" stroke-dasharray="1.6 1"/><circle cx="-5.5" cy="-5.5" r="0.9" fill="#2a7fd4"/><circle cx="5" cy="-5.5" r="0.9" fill="#2a7fd4"/><circle cx="-5.5" cy="5.5" r="0.9" fill="#2a7fd4"/><path d="M1 5 L6 0" stroke="#f0a020" stroke-width="1.6"/><circle cx="6.2" cy="-0.3" r="0.8" fill="#e03030"/></g>
<path d="M385.5 28.0 V31.5" stroke="#bdbdbd" stroke-width="1"/>
<g transform="translate(403.5 20.0)"><path d="M-5.5 -3 L-3 -5.5 H3.5 V4 L1 6.5 H-5.5 Z" fill="#5fa7e3"/><path d="M1 -3 L3.5 -5.5 V4 L1 6.5Z" fill="#3a82c4"/><path d="M5.5 -5 V6" stroke="#333" stroke-width="0.8"/><path d="M-5.5 6.5 H1" stroke="#999" stroke-width="1"/></g>
<path d="M403.5 28.0 V31.5" stroke="#bdbdbd" stroke-width="1"/>
<g transform="translate(421.5 20.0)"><path d="M-5.5 -5.5 H5 M-5.5 -5.5 V5.5 H1 M5 -5.5 V0" fill="none" stroke="#555" stroke-width="0.8" stroke-dasharray="1.6 1"/><circle cx="-5.5" cy="-5.5" r="0.9" fill="#2a7fd4"/><circle cx="5" cy="-5.5" r="0.9" fill="#2a7fd4"/><circle cx="-5.5" cy="5.5" r="0.9" fill="#2a7fd4"/><path d="M1 5 L6 0" stroke="#f0a020" stroke-width="1.6"/><circle cx="6.2" cy="-0.3" r="0.8" fill="#e03030"/></g>
<path d="M421.5 28.0 V31.5" stroke="#bdbdbd" stroke-width="1"/>
<g transform="translate(439.5 20.0)"><path d="M-6 -1 Q0 -6 6 -1 V3 Q0 -1 -6 3Z" fill="#5fa7e3"/><path d="M-6 -1 Q0 -6 6 -1 L4 0 Q0 -3.5 -4 0Z" fill="#9fd0f5"/><ellipse cx="5" cy="1" rx="1.5" ry="2.2" fill="#fff" stroke="#333" stroke-width="0.5"/></g>
<path d="M439.5 28.0 V31.5" stroke="#bdbdbd" stroke-width="1"/>
<g transform="translate(457.5 20.0)"><path d="M-5.5 -5.5 H5 M-5.5 -5.5 V5.5 H1 M5 -5.5 V0" fill="none" stroke="#555" stroke-width="0.8" stroke-dasharray="1.6 1"/><circle cx="-5.5" cy="-5.5" r="0.9" fill="#2a7fd4"/><circle cx="5" cy="-5.5" r="0.9" fill="#2a7fd4"/><circle cx="-5.5" cy="5.5" r="0.9" fill="#2a7fd4"/><path d="M1 5 L6 0" stroke="#f0a020" stroke-width="1.6"/><circle cx="6.2" cy="-0.3" r="0.8" fill="#e03030"/></g>
<path d="M457.5 28.0 V31.5" stroke="#bdbdbd" stroke-width="1"/>
<g transform="translate(475.5 20.0)"><path d="M-5.5 -2 L-2.5 -6 H0 V6 H-5.5Z" fill="#e3e3e3" stroke="#777" stroke-width="0.5"/><path d="M-2.5 -2 L0 -6 V3.5 L-2.5 6Z" fill="#57b36a"/><path d="M2.5 -3 L6 -5.5 V3.5 L2.5 6Z" fill="#e58e55"/></g>
<path d="M475.5 28.0 V31.5" stroke="#bdbdbd" stroke-width="1"/>
<g transform="translate(493.5 20.0)"><path d="M-5.5 -5.5 H5 M-5.5 -5.5 V5.5 H1 M5 -5.5 V0" fill="none" stroke="#555" stroke-width="0.8" stroke-dasharray="1.6 1"/><circle cx="-5.5" cy="-5.5" r="0.9" fill="#2a7fd4"/><circle cx="5" cy="-5.5" r="0.9" fill="#2a7fd4"/><circle cx="-5.5" cy="5.5" r="0.9" fill="#2a7fd4"/><path d="M1 5 L6 0" stroke="#f0a020" stroke-width="1.6"/><circle cx="6.2" cy="-0.3" r="0.8" fill="#e03030"/></g>
<path d="M493.5 28.0 V31.5" stroke="#bdbdbd" stroke-width="1"/>
<g transform="translate(511.5 20.0)"><path d="M-6 -6 H6 V0 Q3 4 0 4 Q-3 4 -6 0Z" fill="#5fa7e3"/><circle cx="0" cy="3" r="2.8" fill="#fff" stroke="#333" stroke-width="0.8"/></g>
<path d="M511.5 28.0 V31.5" stroke="#bdbdbd" stroke-width="1"/>
<g transform="translate(529.5 20.0)"><path d="M-1 -5.5 V5.5 H-6Z" fill="#fff" stroke="#444" stroke-width="0.8"/><path d="M1 -5.5 V5.5 H6Z" fill="#5fa7e3"/></g>
<path d="M529.5 28.0 V31.5" stroke="#bdbdbd" stroke-width="1"/>
<g transform="translate(547.5 20.0)"><path d="M-5.5 -5.5 H5 M-5.5 -5.5 V5.5 H1 M5 -5.5 V0" fill="none" stroke="#555" stroke-width="0.8" stroke-dasharray="1.6 1"/><circle cx="-5.5" cy="-5.5" r="0.9" fill="#2a7fd4"/><circle cx="5" cy="-5.5" r="0.9" fill="#2a7fd4"/><circle cx="-5.5" cy="5.5" r="0.9" fill="#2a7fd4"/><path d="M1 5 L6 0" stroke="#f0a020" stroke-width="1.6"/><circle cx="6.2" cy="-0.3" r="0.8" fill="#e03030"/></g>
<path d="M547.5 28.0 V31.5" stroke="#bdbdbd" stroke-width="1"/>
<g transform="translate(565.5 20.0)"><path d="M-5.5 -3 L-3 -5.5 H3.5 V4 L1 6.5 H-5.5 Z" fill="#5fa7e3"/><path d="M1 -3 L3.5 -5.5 V4 L1 6.5Z" fill="#3a82c4"/><path d="M5.5 -5 V6" stroke="#333" stroke-width="0.8"/><path d="M-5.5 6.5 H1" stroke="#999" stroke-width="1"/></g>
<path d="M565.5 28.0 V31.5" stroke="#bdbdbd" stroke-width="1"/>
<g transform="translate(583.5 20.0)"><path d="M-5.5 -5.5 H5 M-5.5 -5.5 V5.5 H1 M5 -5.5 V0" fill="none" stroke="#555" stroke-width="0.8" stroke-dasharray="1.6 1"/><circle cx="-5.5" cy="-5.5" r="0.9" fill="#2a7fd4"/><circle cx="5" cy="-5.5" r="0.9" fill="#2a7fd4"/><circle cx="-5.5" cy="5.5" r="0.9" fill="#2a7fd4"/><path d="M1 5 L6 0" stroke="#f0a020" stroke-width="1.6"/><circle cx="6.2" cy="-0.3" r="0.8" fill="#e03030"/></g>
<path d="M583.5 28.0 V31.5" stroke="#bdbdbd" stroke-width="1"/>
<g transform="translate(601.5 20.0)"><path d="M-5.5 -3 L-3 -5.5 H3.5 V4 L1 6.5 H-5.5 Z" fill="#5fa7e3"/><path d="M1 -3 L3.5 -5.5 V4 L1 6.5Z" fill="#3a82c4"/><path d="M5.5 -5 V6" stroke="#333" stroke-width="0.8"/><path d="M-5.5 6.5 H1" stroke="#999" stroke-width="1"/></g>
<path d="M601.5 28.0 V31.5" stroke="#bdbdbd" stroke-width="1"/>
<g transform="translate(619.5 20.0)"><path d="M-5.5 -5.5 H5 M-5.5 -5.5 V5.5 H1 M5 -5.5 V0" fill="none" stroke="#555" stroke-width="0.8" stroke-dasharray="1.6 1"/><circle cx="-5.5" cy="-5.5" r="0.9" fill="#2a7fd4"/><circle cx="5" cy="-5.5" r="0.9" fill="#2a7fd4"/><circle cx="-5.5" cy="5.5" r="0.9" fill="#2a7fd4"/><path d="M1 5 L6 0" stroke="#f0a020" stroke-width="1.6"/><circle cx="6.2" cy="-0.3" r="0.8" fill="#e03030"/></g>
<path d="M619.5 28.0 V31.5" stroke="#bdbdbd" stroke-width="1"/>
<g transform="translate(637.5 20.0)"><path d="M-5.5 -2.5 L-2.5 -5.5 H1 Q6 -4 6 1 V3 L3 6 H-5.5Z" fill="#d8d8d8" stroke="#777" stroke-width="0.6"/><path d="M1 -5.5 Q6 -4 6 1 L4 2 Q4 -2 0 -3.5Z" fill="#5fa7e3"/></g>
<path d="M637.5 28.0 V31.5" stroke="#bdbdbd" stroke-width="1"/>
<g transform="translate(655.5 20.0)"><path d="M-5.5 -2.5 L-2.5 -5.5 H1 Q6 -4 6 1 V3 L3 6 H-5.5Z" fill="#d8d8d8" stroke="#777" stroke-width="0.6"/><path d="M1 -5.5 Q6 -4 6 1 L4 2 Q4 -2 0 -3.5Z" fill="#5fa7e3"/></g>
<path d="M655.5 28.0 V31.5" stroke="#bdbdbd" stroke-width="1"/>
<g transform="translate(673.5 20.0)"><path d="M-5.5 -2.5 L-2.5 -5.5 H1 Q6 -4 6 1 V3 L3 6 H-5.5Z" fill="#d8d8d8" stroke="#777" stroke-width="0.6"/><path d="M1 -5.5 Q6 -4 6 1 L4 2 Q4 -2 0 -3.5Z" fill="#5fa7e3"/></g>
<path d="M673.5 28.0 V31.5" stroke="#bdbdbd" stroke-width="1"/>
<g transform="translate(691.5 20.0)"><path d="M-5.5 -2 L-2.5 -6 H0 V6 H-5.5Z" fill="#e3e3e3" stroke="#777" stroke-width="0.5"/><path d="M-2.5 -2 L0 -6 V3.5 L-2.5 6Z" fill="#57b36a"/><path d="M2.5 -3 L6 -5.5 V3.5 L2.5 6Z" fill="#e58e55"/></g>
<path d="M691.5 28.0 V31.5" stroke="#bdbdbd" stroke-width="1"/>
<g transform="translate(709.5 20.0)"><path d="M-5.5 -5.5 H5 M-5.5 -5.5 V5.5 H1 M5 -5.5 V0" fill="none" stroke="#555" stroke-width="0.8" stroke-dasharray="1.6 1"/><circle cx="-5.5" cy="-5.5" r="0.9" fill="#2a7fd4"/><circle cx="5" cy="-5.5" r="0.9" fill="#2a7fd4"/><circle cx="-5.5" cy="5.5" r="0.9" fill="#2a7fd4"/><path d="M1 5 L6 0" stroke="#f0a020" stroke-width="1.6"/><circle cx="6.2" cy="-0.3" r="0.8" fill="#e03030"/></g>
<path d="M709.5 28.0 V31.5" stroke="#bdbdbd" stroke-width="1"/>
<g transform="translate(727.5 20.0)"><path d="M-6 -1 Q0 -6 6 -1 V3 Q0 -1 -6 3Z" fill="#5fa7e3"/><path d="M-6 -1 Q0 -6 6 -1 L4 0 Q0 -3.5 -4 0Z" fill="#9fd0f5"/><ellipse cx="5" cy="1" rx="1.5" ry="2.2" fill="#fff" stroke="#333" stroke-width="0.5"/></g>
<path d="M727.5 28.0 V31.5" stroke="#bdbdbd" stroke-width="1"/>
<g transform="translate(745.5 20.0)"><path d="M-5.5 -5.5 H5 M-5.5 -5.5 V5.5 H1 M5 -5.5 V0" fill="none" stroke="#555" stroke-width="0.8" stroke-dasharray="1.6 1"/><circle cx="-5.5" cy="-5.5" r="0.9" fill="#2a7fd4"/><circle cx="5" cy="-5.5" r="0.9" fill="#2a7fd4"/><circle cx="-5.5" cy="5.5" r="0.9" fill="#2a7fd4"/><path d="M1 5 L6 0" stroke="#f0a020" stroke-width="1.6"/><circle cx="6.2" cy="-0.3" r="0.8" fill="#e03030"/></g>
<path d="M745.5 28.0 V31.5" stroke="#bdbdbd" stroke-width="1"/>
<g transform="translate(763.5 20.0)"><path d="M-6 -1 Q0 -6 6 -1 V3 Q0 -1 -6 3Z" fill="#5fa7e3"/><path d="M-6 -1 Q0 -6 6 -1 L4 0 Q0 -3.5 -4 0Z" fill="#9fd0f5"/><ellipse cx="5" cy="1" rx="1.5" ry="2.2" fill="#fff" stroke="#333" stroke-width="0.5"/></g>
<path d="M763.5 28.0 V31.5" stroke="#bdbdbd" stroke-width="1"/>
<g transform="translate(781.5 20.0)"><path d="M-1 -5.5 V5.5 H-6Z" fill="#fff" stroke="#444" stroke-width="0.8"/><path d="M1 -5.5 V5.5 H6Z" fill="#5fa7e3"/></g>
<path d="M781.5 28.0 V31.5" stroke="#bdbdbd" stroke-width="1"/>
<g transform="translate(799.5 20.0)"><path d="M-1 -5.5 V5.5 H-6Z" fill="#fff" stroke="#444" stroke-width="0.8"/><path d="M1 -5.5 V5.5 H6Z" fill="#5fa7e3"/></g>
<path d="M799.5 28.0 V31.5" stroke="#bdbdbd" stroke-width="1"/>
<path d="M115.5 31.5 H799.5" stroke="#bdbdbd" stroke-width="1.2"/>
<path d="M804.5 8.5 H813.5 L810 13.5 V31.5 H808 V13.5 Z" fill="#555"/>
<g transform="translate(1378 20.0)" fill="#8a8a8a"><circle r="4.6"/><g stroke="#8a8a8a" stroke-width="2.2"><path d="M0 -6.3 V6.3 M-6.3 0 H6.3 M-4.5 -4.5 L4.5 4.5 M4.5 -4.5 L-4.5 4.5"/></g><circle r="1.9" fill="#f0f0f0"/></g>
</svg>
<svg class="a" style="left:0;top:0" width="1394" height="810" style="pointer-events:none">
<!-- nav toolbar -->
<rect x="602" y="752" width="188" height="16.6" fill="#efefef" opacity="0.95"/>
<g fill="#444" stroke="none">
<path d="M621 759 H625 L623 761.5Z M704 759 H708 L706 761.5Z M733 759 H737 L735 761.5Z M755 759 H759 L757 761.5Z M779 759 H783 L781 761.5Z"/>
</g>
<g stroke="#333" fill="none" stroke-width="1">
<path d="M609.5 754 V766 M604 760 H615"/>
<ellipse cx="609.5" cy="760" rx="4.5" ry="2.5"/>
<path d="M630 757 H640 V765 H630Z M632 755 H638" />
<path d="M650 766 Q648 761 650 757 V755 M652 760 V754 M654.5 760 V753.5 M657 760 V754.5 M659 761 V757 Q659 765 656 766 Z"/>
<circle cx="672" cy="759.5" r="3.8" fill="#dbeef0"/><path d="M674.8 762.3 L678 765.5" stroke-width="1.6"/><path d="M676 754.5 V757.5 M674.5 756 H677.5" stroke-width="0.8"/>
<circle cx="691" cy="759.5" r="4.3" fill="#dbeef0"/><path d="M694.3 762.8 L698 766.5" stroke-width="1.6"/>
</g>
<rect x="718.5" y="754.5" width="11" height="8" fill="#9cc3ea" stroke="#555" stroke-width="1"/><rect x="720" y="756" width="8" height="1" fill="#2f5f9e"/><rect x="720" y="760" width="8" height="1" fill="#2f5f9e"/><path d="M721 765.5 H727 M724 762.5 V765.5" stroke="#333" stroke-width="1"/>
<g stroke="#555" stroke-width="0.8"><rect x="741" y="754" width="11" height="11" fill="#e8e8e8"/><path d="M743.7 754 V765 M746.5 754 V765 M749.3 754 V765 M741 756.7 H752 M741 759.5 H752 M741 762.3 H752"/></g>
<rect x="764.5" y="754.5" width="11" height="10" fill="#5fa7e3" stroke="#345" stroke-width="0.8"/><path d="M770 754.5 V764.5 M764.5 759.5 H775.5" stroke="#e8f2fb" stroke-width="1"/>
<!-- viewcube -->
<defs><filter id="vcb" x="-50%" y="-50%" width="200%" height="200%"><feGaussianBlur stdDeviation="3.5"/></filter></defs>
<path d="M1322 168 L1342 182 L1378 170 L1372 160 Z" fill="#000" opacity="0.18" filter="url(#vcb)"/>
<path d="M1321.6 132 L1341.4 145.7 L1341.4 179 L1324 166.7 Z" fill="#ececec"/>
<path d="M1341.4 145.7 L1372 135.8 L1370.4 167.3 L1341.4 179 Z" fill="#f2f2f2"/>
<path d="M1321.6 132 L1350 124.7 L1372 135.8 L1341.4 145.7 Z" fill="#f5f5f5"/>
<g fill="none" stroke="#8a8a8a" stroke-width="0.8" stroke-dasharray="2.5 1.5">
<path d="M1321.6 132 L1350 124.7 L1372 135.8 L1341.4 145.7 Z M1321.6 132 L1324 166.7 L1341.4 179 V145.7"/>
</g>
<text x="1340" y="139" font-family="Liberation Sans" font-size="9" fill="#888" text-anchor="middle" transform="rotate(-12 1346 136)">上</text>
<text x="1330" y="162" font-family="Liberation Sans" font-size="11" fill="#888" text-anchor="middle">右</text>
<text x="1356" y="163" font-family="Liberation Sans" font-size="12" fill="#888" text-anchor="middle">後</text>
<path d="M1370.4 168 L1374 131" stroke="#55e055" stroke-width="1.4"/>
<text x="1374" y="128" font-family="Liberation Sans" font-size="8" fill="#55d055" text-anchor="middle">Y</text>
<path d="M1370.4 168 L1337 183.3" stroke="#f05050" stroke-width="1.4"/>
<text x="1331" y="189" font-family="Liberation Sans" font-size="8" fill="#f06060" text-anchor="middle">X</text>
</svg>

</body></html>
